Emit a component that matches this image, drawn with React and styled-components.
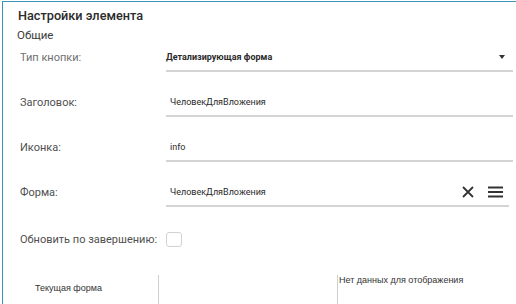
import React from 'react'
import styled, { createGlobalStyle } from 'styled-components'

const BORDER_COLOR = '#3b93ba'

const GlobalStyle = createGlobalStyle`
    html, body {
        margin: 0;
        padding: 0;
        background: #fff;
        overflow: hidden;
    }
    body {
        font-family: Roboto, "Liberation Sans", sans-serif;
    }
`

const Page = styled.div`
    width: 516px;
    height: 304px;
    padding: 1px 0 0 2px;
    box-sizing: border-box;
`

const Panel = styled.div`
    height: 100%;
    border-top: 1px solid ${BORDER_COLOR};
    border-left: 1px solid ${BORDER_COLOR};
    box-sizing: border-box;
    display: flex;
    flex-direction: column;
`

const Title = styled.div`
    font-size: 12.7px;
    font-weight: 500;
    color: #2b2b2b;
    padding: 5px 0 0 15px;
    line-height: 18px;
`

const Group = styled.div`
    font-size: 11.5px;
    color: #3c3c3c;
    padding: 3px 0 0 14px;
    line-height: 14px;
`

const Form = styled.div`
    display: grid;
    grid-template-columns: 146px 1fr;
    row-gap: 17px;
    padding: 2px 3px 0 17px;
`

const Label = styled.div`
    font-size: 11px;
    color: ${p => (p.$muted ? '#707070' : '#505050')};
    display: flex;
    align-items: center;
    height: ${p => (p.$tall ? '30px' : '26px')};
`

const Field = styled.div`
    height: 26px;
    border-bottom: 2px solid #d4d4d4;
    display: flex;
    align-items: center;
    padding-left: ${p => (p.$select ? '0' : '4px')};
    padding-right: 6px;
    margin-right: ${p => (p.$short ? '4px' : '0')};
`

const Value = styled.span`
    flex: 1;
    font-size: 9px;
    font-weight: ${p => (p.$bold ? 700 : 400)};
    color: #2a2a2a;
`

const Caret = styled.span`
    width: 0;
    height: 0;
    border-left: 3px solid transparent;
    border-right: 3px solid transparent;
    border-top: 4px solid #333;
    margin-right: 2px;
`

const Tools = styled.div`
    display: flex;
    align-items: center;
    gap: 14px;
`

const IconButton = styled.span`
    display: flex;
    color: #333;
`

const CheckRow = styled.div`
    display: flex;
    align-items: center;
`

const Check = styled.span`
    width: 16px;
    height: 15px;
    border: 1px solid #d2d2d2;
    border-radius: 3px;
    box-sizing: border-box;
`

const Bottom = styled.div`
    flex: 1;
    display: grid;
    grid-template-columns: 155px 179px 1fr;
    margin-top: 21px;
    font-family: "Liberation Sans", Arial, sans-serif;
    font-size: 9px;
    color: #333;
`

const Cell = styled.div`
    border-left: ${p => (p.$line ? '1px solid #cfcfcf' : 'none')};
    padding: ${p => p.$pad};
`

export default () => (
    <Page>
        <GlobalStyle />
        <Panel>
            <Title>Настройки элемента</Title>
            <Group>Общие</Group>
            <Form>
                <Label $muted>Тип кнопки:</Label>
                <Field $select>
                    <Value $bold>Детализирующая форма</Value>
                    <Caret />
                </Field>

                <Label>Заголовок:</Label>
                <Field>
                    <Value>ЧеловекДляВложения</Value>
                </Field>

                <Label>Иконка:</Label>
                <Field>
                    <Value>info</Value>
                </Field>

                <Label>Форма:</Label>
                <Field $short>
                    <Value>ЧеловекДляВложения</Value>
                    <Tools>
                        <IconButton>
                            <svg width="12" height="12" viewBox="0 0 12 12">
                                <path d="M1 1 L11 11 M11 1 L1 11" stroke="#333" strokeWidth="1.8" />
                            </svg>
                        </IconButton>
                        <IconButton>
                            <svg width="15" height="12" viewBox="0 0 15 12">
                                <path d="M0 1.5 H15 M0 6 H15 M0 10.5 H15" stroke="#333" strokeWidth="1.8" />
                            </svg>
                        </IconButton>
                    </Tools>
                </Field>

                <Label $tall>Обновить по завершению:</Label>
                <CheckRow>
                    <Check />
                </CheckRow>
            </Form>
            <Bottom>
                <Cell $pad="8px 0 0 32px">Текущая форма</Cell>
                <Cell $line />
                <Cell $line $pad="0 0 0 1px">Нет данных для отображения</Cell>
            </Bottom>
        </Panel>
    </Page>
)
